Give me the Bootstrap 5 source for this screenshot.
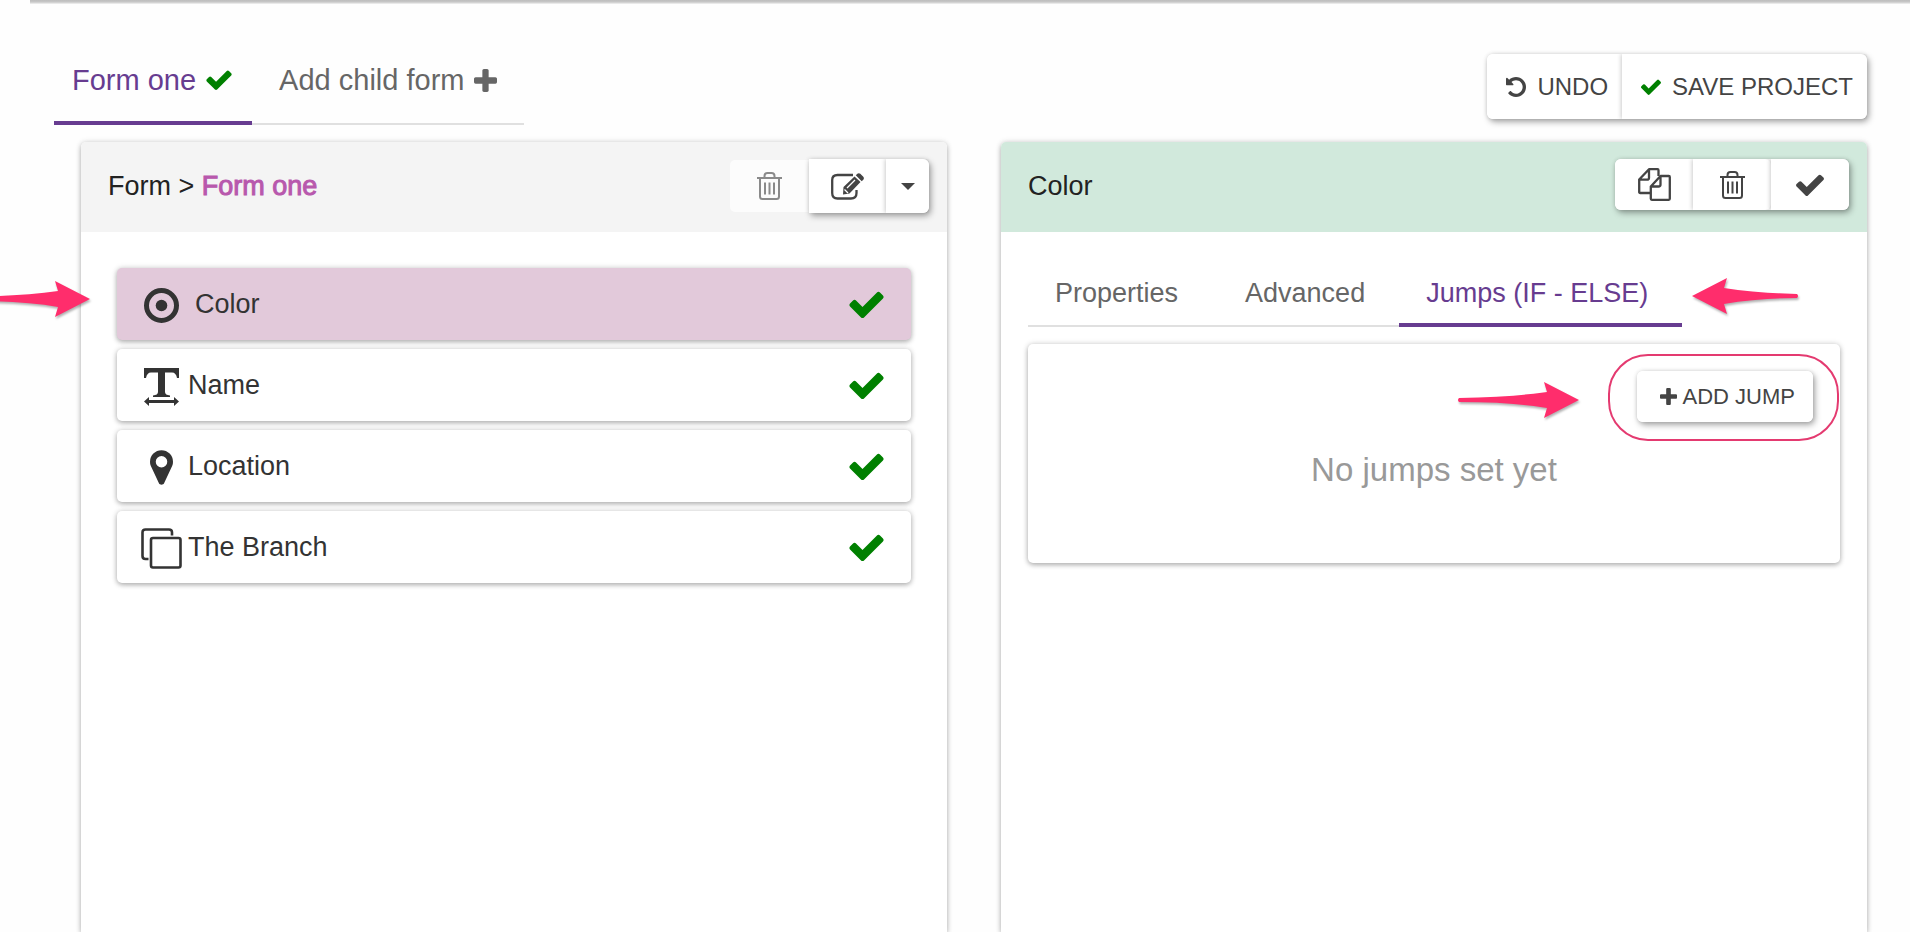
<!DOCTYPE html>
<html lang="en">
<head>
<meta charset="utf-8">
<meta name="viewport" content="width=device-width, initial-scale=1">
<title>Form builder</title>
<link href="https://cdn.jsdelivr.net/npm/bootstrap@5.3.0/dist/css/bootstrap.min.css" rel="stylesheet">
<style>
  :root { --purple: #673c90; --ink: #333; --btn-ink: #444; --hot: #ff2d6c; }
  body { font-family: "Liberation Sans", Arial, sans-serif; font-size: 27px; line-height: 36px; color: var(--ink); background: #fefefe; overflow: hidden; }
  svg { display: block; flex: none; fill: currentColor; }
  .page { padding: 54px 43px 0 54px; }
  .page-top { height: 4px; margin-left: 30px; background: linear-gradient(#bdbdbd, #c8c8c8 50%, #f4f4f4); position: absolute; inset: 0 0 auto 0; }
  .tab-line { border-bottom: 2px solid #e0e0e0; }
  .tab-line .nav-link { color: #666; border-radius: 0; padding: 0 27px; margin-bottom: -2px; border-bottom: 4px solid transparent; display: flex; align-items: center; white-space: nowrap; }
  .tab-line .nav-link.active { color: var(--purple); border-bottom-color: var(--purple); }
  .form-tabs { font-size: 29px; }
  .form-tabs .nav-link { height: 71px; padding-bottom: 15px; gap: 10px; }
  .form-tabs .nav-link.active { padding-left: 18px; padding-right: 20px; }
  .side-tabs .nav-link { height: 68px; padding-top: 3px; }
  .side-tabs .nav-link.wide { padding-left: 40px; padding-right: 34px; }
  .side-tabs .nav-link.active { padding-right: 34px; }
  .ok { color: green; }
  .raised { box-shadow: 0 2px 5px rgba(0,0,0,.26), 0 0 6px rgba(0,0,0,.14); border-radius: 5px; background: #fff; }
  .tool-set { box-shadow: 2px 3px 6px rgba(0,0,0,.34), 0 0 4px rgba(0,0,0,.12); border-radius: 6px; background: #fff; }
  .tool-set .btn { color: var(--btn-ink); font-size: 24px; line-height: 30px; border: 0; background: #fff; padding: 0; display: flex; align-items: center; justify-content: center; border-radius: 6px; white-space: nowrap; }
  .tool-set .btn + .btn { box-shadow: -1px 0 4px rgba(0,0,0,.2); clip-path: inset(0 0 0 -6px); border-top-left-radius: 0; border-bottom-left-radius: 0; }
  .main-tools .btn { height: 65px; padding: 0 14px 0 19px; gap: 11px; }
  .icon-tools .btn { height: 51px; width: 78px; }
  .left-tools .btn { height: 54px; width: 77px; }
  .left-tools .caret-btn { width: 43px; }
  .left-tools, .left-tools .btn:first-child { border-top-left-radius: 0; border-bottom-left-radius: 0; }
  .bin-off { width: 79px; height: 52px; border: 0; border-radius: 5px 0 0 5px; }
  .bin-off:disabled { background: #fcfcfc; color: #8a8a8a; opacity: 1; }
  .panels { display: grid; grid-template-columns: 1fr 1fr; column-gap: 54px; margin: 17px 0 0 27px; }
  .panel { background: #fff; box-shadow: 0 2px 5px rgba(0,0,0,.26), 0 0 6px rgba(0,0,0,.12); border-radius: 5px 5px 0 0; }
  .panel-head { height: 90px; color: #222; padding: 17px 18px 0 27px; border-radius: 5px 5px 0 0; }
  .panel-title { line-height: 54px; }
  .head-grey { background: #f4f4f4; }
  .head-green { background: #d1e9dc; }
  .form-name { color: #b858ad; -webkit-text-stroke: 1px #b858ad; }
  .inputs { padding: 36px; display: grid; row-gap: 9px; }
  .input-row { height: 72px; padding: 0 27px 0 22px; }
  .input-row.picked { background: #e2c9da; }
  .input-icon { width: 45px; display: flex; justify-content: center; margin-right: 4px; padding-top: 2px; }
  .picked .input-icon { margin-right: 11px; }
  .side-body { padding: 27px; }
  .jumps { margin-top: 17px; min-height: 219px; padding: 27px; }
  .add-jump .btn { font-size: 22px; height: 51px; padding: 0 18px 0 23px; gap: 6px; }
  .no-jumps { font-size: 33px; line-height: 40px; color: #999; margin-top: 28px; }
  .hot { color: var(--hot); filter: drop-shadow(1px 2px 1px rgba(0,0,0,.3)); position: absolute; }
  .hot-row { right: calc(100% + 27px); top: 13px; }
  .hot-tab { left: calc(100% + 10px); top: 19px; }
  .hot-add { right: calc(100% + 58px); top: 11px; }
  .ring { position: absolute; inset: -17px -26px -19px -29px; border: 2px solid #e43a70; border-radius: 40px; pointer-events: none; }
</style>
</head>
<body>
<svg class="d-none" aria-hidden="true">
  <symbol id="check" viewBox="121 298 1550 1224"><path d="M1671 566q0 40-28 68l-724 724-136 136q-28 28-68 28t-68-28l-136-136-362-362q-28-28-28-68t28-68l136-136q28-28 68-28t68 28l294 295 656-657q28-28 68-28t68 28l136 136q28 28 28 68z"/></symbol>
  <symbol id="plus" viewBox="192 128 1408 1408"><path d="M1600 736v192q0 40-28 68t-68 28h-416v416q0 40-28 68t-68 28h-192q-40 0-68-28t-28-68v-416h-416q-40 0-68-28t-28-68v-192q0-40 28-68t68-28h416v-416q0-40 28-68t68-28h192q40 0 68 28t28 68v416h416q40 0 68 28t28 68z"/></symbol>
  <symbol id="undo" viewBox="128 128 1536 1536"><path d="M1664 896q0 156-61 298t-164 245-245 164-298 61q-172 0-327-72.5t-264-204.5q-7-10-6.5-22.5t8.5-20.5l137-138q10-9 25-9 16 2 23 12 73 95 179 147t225 52q104 0 198.5-40.5t163.5-109.5 109.5-163.5 40.5-198.5-40.5-198.5-109.5-163.5-163.5-109.5-198.5-40.5q-98 0-188 35.5t-160 101.5l137 138q31 30 14 69-17 40-59 40h-448q-26 0-45-19t-19-45v-448q0-42 40-59 39-17 69 14l130 129q107-101 244.5-156.5t284.5-55.5q156 0 298 61t245 164 164 245 61 298z"/></symbol>
  <symbol id="pin" viewBox="384 128 1024 1536"><path d="M1152 640q0-106-75-181t-181-75-181 75-75 181 75 181 181 75 181-75 75-181zm256 0q0 109-33 179l-364 774q-16 33-47.5 52t-67.5 19-67.5-19-46.5-52l-365-774q-33-70-33-179 0-212 150-362t362-150 362 150 150 362z"/></symbol>
  <symbol id="bin" viewBox="0 0 25 28"><g fill="none" stroke="currentColor" stroke-width="2"><path d="M0 6h25M3 6v18.500q0 2.500 2.500 2.500h14q2.500 0 2.500-2.500V6M7.500 6V4q0-3 3-3h4q3 0 3 3v2"/><path d="M8 10.500v12M12.500 10.500v12M17 10.500v12"/></g></symbol>
  <symbol id="edit" viewBox="0 0 33 27"><path fill="none" stroke="currentColor" stroke-width="2.300" d="M22 2H6.500Q1.200 2 1.200 7v13q0 5.500 5.300 5.500h13.500q5.500 0 5.500-5.500v-3"/><path d="M12 21.500l.5-7.500L23.500 3.500l6 5.500L18.500 20.500zM24.800 2.300l1.500-1.500q1.500-1.200 3 0l3 3q1.200 1.500 0 3l-1.600 1.500z"/><path d="M13.500 16.500l3.500 3.500M16 15l8-8" stroke="#fff" stroke-width="1.300" fill="none"/></symbol>
  <symbol id="copy" viewBox="0 0 33 33"><g fill="none" stroke="currentColor" stroke-width="2.300" stroke-linejoin="round"><path d="M12.500 25H2.200q-1 0-1-1V11.500L11 1.200h8.500q1 0 1 1V8M11 1.200v8.500q0 2-2 2H1.200"/><path d="M12.800 18.500L22.500 8h8.300q1 0 1 1v21.800q0 1-1 1h-17q-1 0-1-1zM22.500 8v8.500q0 2-2 2h-7.700"/></g></symbol>
  <symbol id="arrow" viewBox="0 0 122 36"><path d="M2 16Q55 15 90 10L87 0 122 18 87 36 90 26Q55 20 2 20Q0 18 2 16z"/></symbol>
</svg>

<div class="page-top"></div>
<div class="page vh-100 d-flex flex-column">
  <header class="d-flex justify-content-between align-items-start">
    <ul class="nav flex-nowrap tab-line form-tabs">
      <li class="nav-item"><a class="nav-link active" href="#">Form one <svg class="ok" width="26" height="20"><use href="#check"/></svg></a></li>
      <li class="nav-item"><a class="nav-link" href="#">Add child form <svg width="23" height="23"><use href="#plus"/></svg></a></li>
    </ul>
    <div class="d-flex tool-set main-tools">
      <button type="button" class="btn"><svg width="20" height="20"><use href="#undo"/></svg>UNDO</button>
      <button type="button" class="btn"><svg class="ok" width="20" height="16"><use href="#check"/></svg>SAVE PROJECT</button>
    </div>
  </header>

  <main class="panels flex-grow-1">
    <section class="panel">
      <div class="panel-head head-grey d-flex align-items-start justify-content-between">
        <div class="panel-title">Form &gt; <span class="form-name">Form one</span></div>
        <div class="d-flex align-items-center">
          <button type="button" class="btn bin-off d-flex align-items-center justify-content-center p-0" disabled aria-label="Delete form"><svg width="25" height="28"><use href="#bin"/></svg></button>
          <div class="d-flex tool-set icon-tools left-tools">
            <button type="button" class="btn" aria-label="Edit form"><svg width="33" height="27"><use href="#edit"/></svg></button>
            <button type="button" class="btn caret-btn" aria-label="More"><svg width="14" height="7" viewBox="0 0 14 7"><path d="M0 0h14L7 7z"/></svg></button>
          </div>
        </div>
      </div>
      <div class="inputs">
        <div class="raised input-row picked d-flex align-items-center position-relative">
          <svg class="hot hot-row" width="122" height="36"><use href="#arrow"/></svg>
          <span class="input-icon"><svg width="35" height="35" viewBox="0 0 35 35"><circle cx="17.500" cy="17.500" r="15" fill="none" stroke="currentColor" stroke-width="5"/><circle cx="17.500" cy="17.500" r="5.800"/></svg></span>
          <span class="flex-grow-1">Color</span>
          <svg class="ok" width="35" height="27"><use href="#check"/></svg>
        </div>
        <div class="raised input-row d-flex align-items-center">
          <span class="input-icon"><svg width="35" height="40" viewBox="0 -2 35 40"><path d="M0 0h35v10h-2q-1-5.500-5-5.500h-7V24q0 3 5 3.500V29H9v-1.500q5-.5 5-3.500V4.500H7Q3 4.500 2 10H0zM0 33.500L5 29v3h25v-3l5 4.500-5 4.500v-3H5v3z"/></svg></span>
          <span class="flex-grow-1">Name</span>
          <svg class="ok" width="35" height="27"><use href="#check"/></svg>
        </div>
        <div class="raised input-row d-flex align-items-center">
          <span class="input-icon"><svg width="23" height="35"><use href="#pin"/></svg></span>
          <span class="flex-grow-1">Location</span>
          <svg class="ok" width="35" height="27"><use href="#check"/></svg>
        </div>
        <div class="raised input-row d-flex align-items-center">
          <span class="input-icon"><svg width="41" height="41" viewBox="0 0 41 41"><g fill="none" stroke="currentColor" stroke-width="2.600"><rect x="10" y="10" width="29.500" height="29.500" rx="2"/><path d="M31 7.500V4.500q0-3-3-3H4.500Q1.500 1.500 1.500 4.500v23.500q0 3 3 3h3"/></g></svg></span>
          <span class="flex-grow-1">The Branch</span>
          <svg class="ok" width="35" height="27"><use href="#check"/></svg>
        </div>
      </div>
    </section>

    <section class="panel">
      <div class="panel-head head-green d-flex align-items-start justify-content-between">
        <div class="panel-title">Color</div>
        <div class="d-flex tool-set icon-tools">
          <button type="button" class="btn" aria-label="Copy"><svg width="33" height="33"><use href="#copy"/></svg></button>
          <button type="button" class="btn" aria-label="Delete"><svg width="25" height="28"><use href="#bin"/></svg></button>
          <button type="button" class="btn" aria-label="Confirm"><svg width="28" height="22"><use href="#check"/></svg></button>
        </div>
      </div>
      <div class="side-body">
        <div class="d-flex">
          <div class="position-relative">
            <ul class="nav flex-nowrap tab-line side-tabs">
              <li class="nav-item"><a class="nav-link" href="#">Properties</a></li>
              <li class="nav-item"><a class="nav-link wide" href="#">Advanced</a></li>
              <li class="nav-item"><a class="nav-link active" href="#">Jumps (IF - ELSE)</a></li>
            </ul>
            <svg class="hot hot-tab" width="107" height="36" viewBox="0 0 107 36"><path d="M105 16Q65 15 32 10L35 0 0 18 35 36 32 26Q65 20 105 20Q107 18 105 16z"/></svg>
          </div>
        </div>
        <div class="raised jumps">
          <div class="d-flex justify-content-end">
            <div class="tool-set add-jump position-relative">
              <svg class="hot hot-add" width="122" height="36"><use href="#arrow"/></svg>
              <button type="button" class="btn"><svg width="17" height="17"><use href="#plus"/></svg>ADD JUMP</button>
              <span class="ring"></span>
            </div>
          </div>
          <div class="no-jumps text-center">No jumps set yet</div>
        </div>
      </div>
    </section>
  </main>
</div>
<script src="https://cdn.jsdelivr.net/npm/bootstrap@5.3.0/dist/js/bootstrap.bundle.min.js"></script>
</body>
</html>
